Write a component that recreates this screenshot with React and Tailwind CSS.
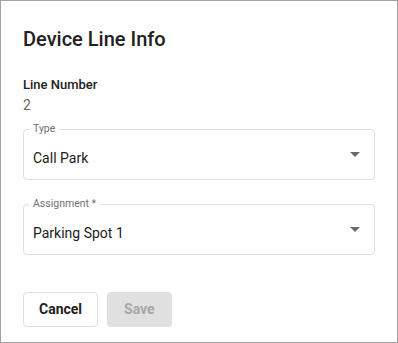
import React from 'react';

const ArrowDropDown = () => (
  <svg className="w-6 h-6 -mt-[6px] shrink-0 fill-[#6b6b6b]" viewBox="0 0 24 24">
    <path d="M7 10l5 5 5-5z" />
  </svg>
);

// outlined select with notched label
const SelectField = ({ label, value, className }) => (
  <fieldset className={`border border-[#dedede] rounded pl-[5px] pr-[7px] ${className}`}>
    <legend className="px-[4px] text-[10.5px] leading-[12px] text-[#707070]">{label}</legend>
    <div className="flex items-start justify-between pl-[4px] pt-[13px] pb-[11px]">
      <span className="text-[14px] leading-[20px] text-[#212121]">{value}</span>
      <ArrowDropDown />
    </div>
  </fieldset>
);

export default function App() {
  return (
    <div className="w-[398px] h-[343px] border border-[#a3a3a3] bg-white px-[22px] pt-[22px] font-['Roboto','Liberation_Sans',sans-serif]">
      <h2 className="text-[20px] leading-[32px] font-medium text-[#212121]">Device Line Info</h2>

      <div className="mt-5">
        <p className="text-[13px] leading-[20px] font-medium text-[#212121]">Line Number</p>
        <p className="text-[14px] leading-[20px] text-[#666666]">2</p>
      </div>

      <SelectField label="Type" value="Call Park" className="mt-[8px]" />
      <SelectField label="Assignment *" value="Parking Spot 1" className="mt-[18px]" />

      <div className="flex gap-[9px] mt-[37px]">
        <button className="h-[35px] px-[15px] rounded border border-[#dedede] bg-white text-[14px] font-bold text-[#212121]">
          Cancel
        </button>
        <button disabled className="h-[35px] px-[17px] rounded bg-[#e0e0e0] text-[14px] font-bold text-[#a6a6a6]">
          Save
        </button>
      </div>
    </div>
  );
}
